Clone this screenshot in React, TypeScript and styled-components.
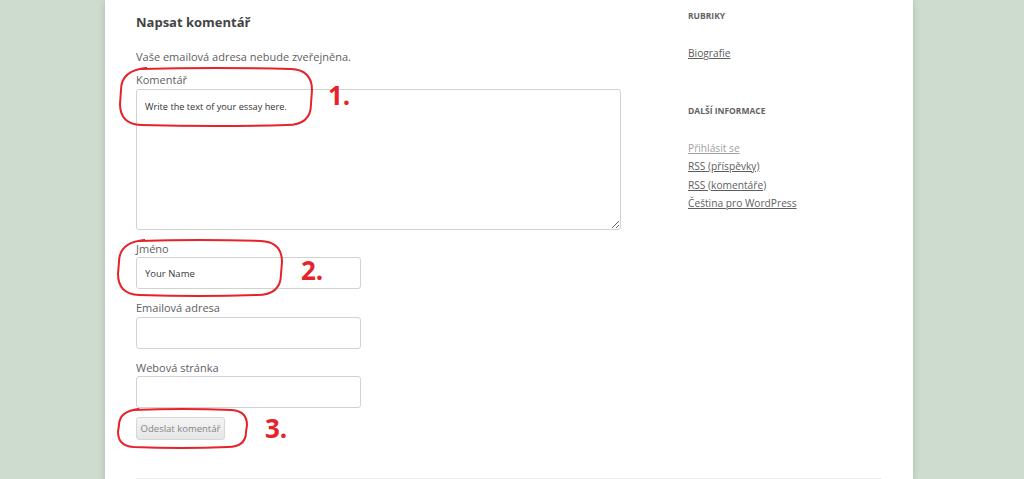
import styled, { createGlobalStyle } from "styled-components";

const GlobalStyle = createGlobalStyle`
  html, body {
    margin: 0;
    padding: 0;
    background: #cddccf;
    font-family: "Open Sans", "Liberation Sans", sans-serif;
  }
`;

const Page = styled.div`
  width: 1024px;
  height: 479px;
  overflow: hidden;
`;

const Site = styled.div`
  margin-left: 105px;
  width: 808px;
  height: 479px;
  padding: 0 31px;
  box-sizing: border-box;
  background: #fff;
  box-shadow: 0 2px 6px rgba(100, 100, 100, 0.3);
  display: flex;
  flex-direction: column;
`;

const Columns = styled.div`
  display: flex;
  justify-content: space-between;
`;

const Main = styled.section`
  width: 485px;
  padding-top: 10px;
`;

const ReplyTitle = styled.h3`
  margin: 0;
  font-size: 13px;
  line-height: 24px;
  font-weight: 700;
  color: #444;
`;

const Notes = styled.p`
  margin: 13px 0 0;
  font-size: 11px;
  line-height: 20px;
  color: #5e5e5e;
`;

const Field = styled.div<{ $first?: boolean }>`
  position: relative;
  margin-top: ${(p) => (p.$first ? "4px" : "10px")};
`;

const Label = styled.label`
  display: block;
  font-size: 11px;
  line-height: 17.5px;
  color: #5e5e5e;
`;

const TextArea = styled.textarea`
  display: block;
  width: 485px;
  height: 141px;
  box-sizing: border-box;
  padding: 9px 8px;
  border: 1px solid #d2d2d2;
  border-radius: 3px;
  font-family: "Open Sans", "Liberation Sans", sans-serif;
  font-size: 9.2px;
  line-height: 15px;
  color: #333;
  resize: vertical;
`;

const TextInput = styled.input`
  display: block;
  width: 225px;
  height: 32px;
  box-sizing: border-box;
  padding: 0 8px;
  border: 1px solid #d2d2d2;
  border-radius: 3px;
  font-family: "Open Sans", "Liberation Sans", sans-serif;
  font-size: 9.5px;
  color: #3a3a3a;
`;

const SubmitRow = styled.div`
  position: relative;
  margin-top: 9px;
`;

const Submit = styled.button`
  display: block;
  width: 89px;
  height: 23px;
  padding: 0;
  border: 1px solid #d6d6d6;
  border-radius: 3px;
  background: linear-gradient(to bottom, #f4f4f4, #e6e6e6);
  font-family: "Open Sans", "Liberation Sans", sans-serif;
  font-size: 9.5px;
  color: #868686;
`;

const Loop = styled.svg<{ $l: number; $t: number }>`
  position: absolute;
  left: ${(p) => p.$l}px;
  top: ${(p) => p.$t}px;
  overflow: visible;
  pointer-events: none;
`;

const Mark = styled.span<{ $l: number; $t: number }>`
  position: absolute;
  left: ${(p) => p.$l}px;
  top: ${(p) => p.$t}px;
  font-size: 26px;
  line-height: 1;
  font-weight: 700;
  color: #e8222a;
`;

const Sidebar = styled.aside`
  width: 194px;
  padding-top: 9px;
`;

const Widget = styled.div`
  margin-bottom: 41px;
`;

const WidgetTitle = styled.h3`
  margin: 0 0 21px;
  font-size: 8.5px;
  line-height: 14px;
  font-weight: 700;
  text-transform: uppercase;
  color: #636363;
`;

const LinkList = styled.ul`
  list-style: none;
  margin: 0;
  padding: 0;
`;

const Link = styled.a<{ $visited?: boolean }>`
  display: block;
  font-size: 10.2px;
  line-height: 18.5px;
  color: ${(p) => (p.$visited ? "#9f9f9f" : "#5e5e5e")};
  text-decoration: underline;
`;

const Divider = styled.div`
  margin-top: auto;
  border-top: 1px solid #ededed;
  height: 0;
`;

function Annotation({
  l,
  t,
  w,
  h,
  n,
  nl,
  nt,
}: {
  l: number;
  t: number;
  w: number;
  h: number;
  n: string;
  nl: number;
  nt: number;
}) {
  const r = Math.min(22, h / 2.4);
  return (
    <>
      <Loop $l={l} $t={t} width={w} height={h} viewBox={`0 0 ${w} ${h}`}>
        <path
          d={`M ${r} 1 Q ${w / 2} -1 ${w - r} 1 Q ${w - 1} 2 ${w - 1} ${r} L ${w - 2} ${h - r} Q ${w - 2} ${h - 1} ${w - r - 4} ${h - 1} Q ${w / 2} ${h + 1} ${r} ${h - 1} Q 1 ${h - 2} 1 ${h - r} L 2 ${r} Q 2 2 ${r + 6} 0`}
          fill="none"
          stroke="#e8222a"
          strokeWidth="2"
        />
      </Loop>
      <Mark $l={nl} $t={nt}>
        {n}
      </Mark>
    </>
  );
}

export default function App() {
  return (
    <Page>
      <GlobalStyle />
      <Site>
        <Columns>
          <Main>
            <ReplyTitle>Napsat komentář</ReplyTitle>
            <Notes>Vaše emailová adresa nebude zveřejněna.</Notes>
            <Field $first>
              <Label>Komentář</Label>
              <TextArea defaultValue="Write the text of your essay here." />
              <Annotation l={-17} t={-3} w={194} h={58} n="1." nl={192} nt={11} />
            </Field>
            <Field>
              <Label>Jméno</Label>
              <TextInput defaultValue="Your Name" />
              <Annotation l={-19} t={0} w={166} h={56} n="2." nl={165} nt={17} />
            </Field>
            <Field>
              <Label>Emailová adresa</Label>
              <TextInput />
            </Field>
            <Field>
              <Label>Webová stránka</Label>
              <TextInput />
            </Field>
            <SubmitRow>
              <Submit>Odeslat komentář</Submit>
              <Annotation l={-19} t={-8} w={131} h={39} n="3." nl={129} nt={-2.5} />
            </SubmitRow>
          </Main>
          <Sidebar>
            <Widget>
              <WidgetTitle>Rubriky</WidgetTitle>
              <LinkList>
                <li>
                  <Link>Biografie</Link>
                </li>
              </LinkList>
            </Widget>
            <Widget>
              <WidgetTitle>Další informace</WidgetTitle>
              <LinkList>
                <li>
                  <Link $visited>Přihlásit se</Link>
                </li>
                <li>
                  <Link>RSS (příspěvky)</Link>
                </li>
                <li>
                  <Link>RSS (komentáře)</Link>
                </li>
                <li>
                  <Link>Čeština pro WordPress</Link>
                </li>
              </LinkList>
            </Widget>
          </Sidebar>
        </Columns>
        <Divider />
      </Site>
    </Page>
  );
}
